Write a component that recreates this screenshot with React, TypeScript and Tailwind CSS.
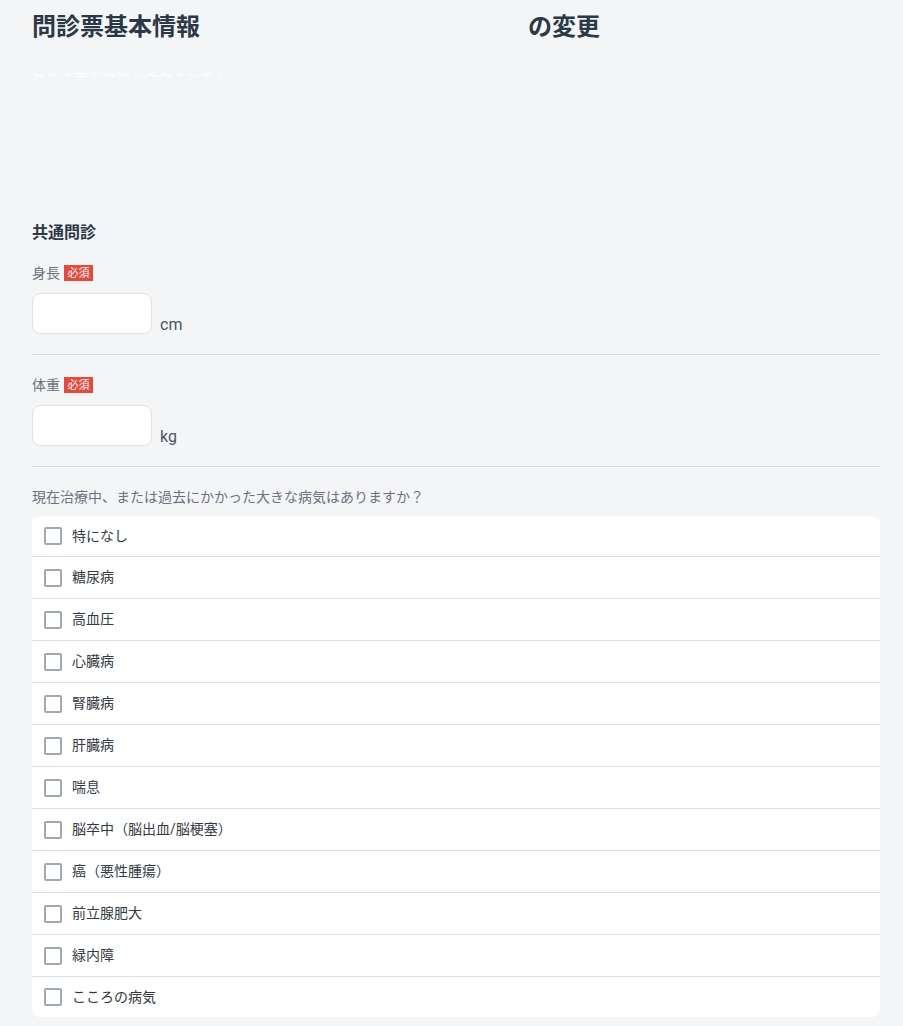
import React from 'react';

const diseases = [
  '特になし',
  '糖尿病',
  '高血圧',
  '心臓病',
  '腎臓病',
  '肝臓病',
  '喘息',
  '脳卒中（脳出血/脳梗塞）',
  '癌（悪性腫瘍）',
  '前立腺肥大',
  '緑内障',
  'こころの病気',
];

const Required = () => (
  <span className="ml-1 inline-flex h-[16px] w-[29px] items-center justify-center bg-[#e5493a] text-[11px] leading-none text-white">
    必須
  </span>
);

const NumberField = ({ label, unit }: { label: string; unit: string }) => (
  <div className="pt-[20px]">
    <div className="flex items-center text-[14px] leading-[20px] text-[#6b7280]">
      {label}
      <Required />
    </div>
    <div className="mt-[10px] flex items-end">
      <input
        type="text"
        className="h-[41px] w-[120px] rounded-[8px] border border-[#dfe3e8] bg-white px-3 outline-none"
      />
      <span className="mb-[1px] ml-2 text-[16px] leading-none text-[#4a5563]">{unit}</span>
    </div>
    <div className="mt-[20px] h-px bg-[#d3dce6]" />
  </div>
);

const App = () => {
  return (
    <div
      className="min-h-[1026px] bg-[#f4f5f7] pl-8 pr-[23px]"
      style={{ fontFamily: "Roboto, 'Noto Sans CJK JP', sans-serif" }}
    >
      <div className="flex pt-[12px] text-[24px] font-bold leading-[30px] text-[#2b3947]">
        <h1 className="w-[496px]">問診票基本情報</h1>
        <span>の変更</span>
      </div>

      <div className="mt-[31px] h-[4px] overflow-hidden">
        <p className="-mt-[10px] text-[14px] leading-[14px] text-white">ここで基本情報を変更できます</p>
      </div>

      <h2 className="mt-[146px] text-[16px] font-bold leading-[20px] text-[#2b3947]">共通問診</h2>

      <NumberField label="身長" unit="cm" />
      <NumberField label="体重" unit="kg" />

      <p className="mt-[20px] text-[14px] leading-[20px] text-[#6b7280]">
        現在治療中、または過去にかかった大きな病気はありますか？
      </p>

      <ul className="mt-[9px] overflow-hidden rounded-[8px] bg-white">
        {diseases.map((d, i) => (
          <li
            key={d}
            className={
              i === 0
                ? 'flex h-[41px] items-center border-b border-[#d5e1ec] pl-3'
                : i < diseases.length - 1
                  ? 'flex h-[42px] items-center border-b border-[#d5e1ec] pl-3'
                  : 'flex h-[40px] items-center pl-3'
            }
          >
            <span className="h-[18px] w-[18px] rounded-[2px] border-2 border-[#a0a9b3] bg-white" />
            <span className="ml-[10px] text-[14px] text-[#333a44]">{d}</span>
          </li>
        ))}
      </ul>
    </div>
  );
};

export default App;
